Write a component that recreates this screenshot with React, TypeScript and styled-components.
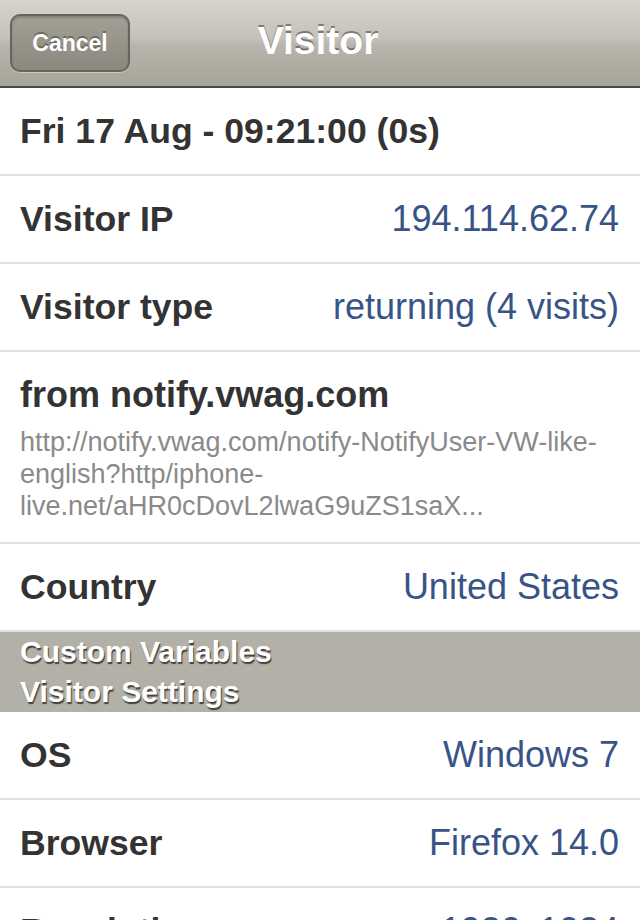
import React from "react";
import styled, { createGlobalStyle } from "styled-components";

const Global = createGlobalStyle`
  html, body { margin: 0; padding: 0; background: #ffffff; }
  body { font-family: "Liberation Sans", Arial, Helvetica, sans-serif; }
  #root { width: 640px; height: 920px; overflow: hidden; }
`;

const Screen = styled.div`
  width: 640px;
  height: 920px;
  overflow: hidden;
  background: #ffffff;
  display: flex;
  flex-direction: column;
`;

const NavBar = styled.header`
  position: relative;
  flex: 0 0 auto;
  height: 86px;
  border-bottom: 2px solid #4a4843;
  background: linear-gradient(
    to bottom,
    #d6d4cd 0%,
    #c4c1b9 45%,
    #b8b5ac 52%,
    #a6a398 100%
  );
  display: flex;
  align-items: center;
  justify-content: center;
  padding: 0 4px 4px 0;
  box-sizing: border-box;
  height: 88px;
`;

const NavTitle = styled.h1`
  margin: 0;
  font-size: 39px;
  font-weight: bold;
  color: #ffffff;
  text-shadow: 0 -2px 0 rgba(60, 58, 52, 0.55);
`;

const BarButton = styled.button`
  position: absolute;
  left: 10px;
  top: 14px;
  width: 120px;
  height: 58px;
  border-radius: 10px;
  border: 2px solid #67655e;
  background: linear-gradient(to bottom, #a3a096 0%, #96938a 50%, #8b887e 100%);
  box-shadow: inset 0 2px 2px rgba(0, 0, 0, 0.18), 0 1px 0 rgba(255, 255, 255, 0.35);
  color: #ffffff;
  font-family: "Liberation Sans", Arial, sans-serif;
  font-size: 23px;
  font-weight: bold;
  text-shadow: 0 -2px 0 rgba(50, 48, 44, 0.45);
  padding: 0;
  cursor: pointer;
`;

const Row = styled.div`
  flex: 0 0 auto;
  height: 86px;
  border-bottom: 2px solid #e0e0e0;
  padding: 0 21px 0 20px;
  display: flex;
  align-items: center;
  justify-content: space-between;
  box-sizing: content-box;
`;

const Label = styled.span`
  font-size: 35.6px;
  font-weight: bold;
  color: #333333;
  white-space: nowrap;
`;

const Value = styled.span`
  font-size: 36px;
  color: #385487;
  white-space: nowrap;
`;

const SubtitleRow = styled.div`
  flex: 0 0 auto;
  border-bottom: 2px solid #e0e0e0;
  padding: 22px 20px 20px;
  display: flex;
  flex-direction: column;
  height: 148px;
  box-sizing: content-box;
`;

const SubTitle = styled.div`
  font-size: 36px;
  font-weight: bold;
  color: #333333;
  line-height: 42px;
  margin-bottom: 10px;
`;

const SubLine = styled.div`
  font-size: 27px;
  line-height: 32px;
  color: #8a8a8a;
  white-space: nowrap;
`;

const SectionHeader = styled.div`
  flex: 0 0 auto;
  background: #b3b0a8;
  padding: 0 20px;
  display: flex;
  flex-direction: column;
`;

const SectionTitle = styled.div`
  height: 40px;
  line-height: 40px;
  font-size: 30px;
  font-weight: bold;
  color: #ffffff;
  text-shadow: 1px 2px 1px rgba(45, 45, 42, 0.85);
  white-space: nowrap;
`;

export default function App() {
  return (
    <>
      <Global />
      <Screen>
        <NavBar>
          <BarButton>Cancel</BarButton>
          <NavTitle>Visitor</NavTitle>
        </NavBar>
        <Row>
          <Label>Fri 17 Aug - 09:21:00 (0s)</Label>
        </Row>
        <Row>
          <Label>Visitor IP</Label>
          <Value>194.114.62.74</Value>
        </Row>
        <Row>
          <Label>Visitor type</Label>
          <Value>returning (4 visits)</Value>
        </Row>
        <SubtitleRow>
          <SubTitle>from notify.vwag.com</SubTitle>
          <SubLine>http://notify.vwag.com/notify-NotifyUser-VW-like-</SubLine>
          <SubLine>english?http/iphone-</SubLine>
          <SubLine>live.net/aHR0cDovL2lwaG9uZS1saX...</SubLine>
        </SubtitleRow>
        <Row>
          <Label>Country</Label>
          <Value>United States</Value>
        </Row>
        <SectionHeader>
          <SectionTitle>Custom Variables</SectionTitle>
          <SectionTitle>Visitor Settings</SectionTitle>
        </SectionHeader>
        <Row>
          <Label>OS</Label>
          <Value>Windows 7</Value>
        </Row>
        <Row>
          <Label>Browser</Label>
          <Value>Firefox 14.0</Value>
        </Row>
        <Row>
          <Label>Resolution</Label>
          <Value>1920x1024</Value>
        </Row>
      </Screen>
    </>
  );
}
